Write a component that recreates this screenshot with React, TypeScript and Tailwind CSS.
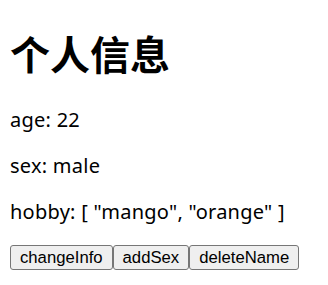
export default function App() {
  const info = { age: 22, sex: "male", hobby: ["mango", "orange"] };
  const btn =
    "h-[25px] px-[9px] border border-[#767676] rounded-[3px] bg-[#efefef] text-[16.7px] leading-[19px] text-black font-['Liberation_Sans',Arial,sans-serif]";
  return (
    <div className="px-[10px] pt-[27px] bg-white text-black font-['Noto_Sans','Noto_Sans_CJK_SC',sans-serif]">
      <h1 className="text-[40px] leading-[53px] font-bold mb-[27px] font-['Noto_Sans_CJK_SC',sans-serif]">个人信息</h1>
      <p className="text-[20px] leading-[26px] mb-[20px] tracking-[0.25px]">age: {info.age}</p>
      <p className="text-[20px] leading-[26px] mb-[20px] tracking-[0.25px]">sex: {info.sex}</p>
      <p className="text-[20px] leading-[26px] mb-[20px] tracking-[0.25px]">
        hobby: [ {info.hobby.map((h) => `"${h}"`).join(", ")} ]
      </p>
      <div className="flex">
        <button className={btn}>changeInfo</button>
        <button className={btn}>addSex</button>
        <button className={btn}>deleteName</button>
      </div>
    </div>
  );
}
